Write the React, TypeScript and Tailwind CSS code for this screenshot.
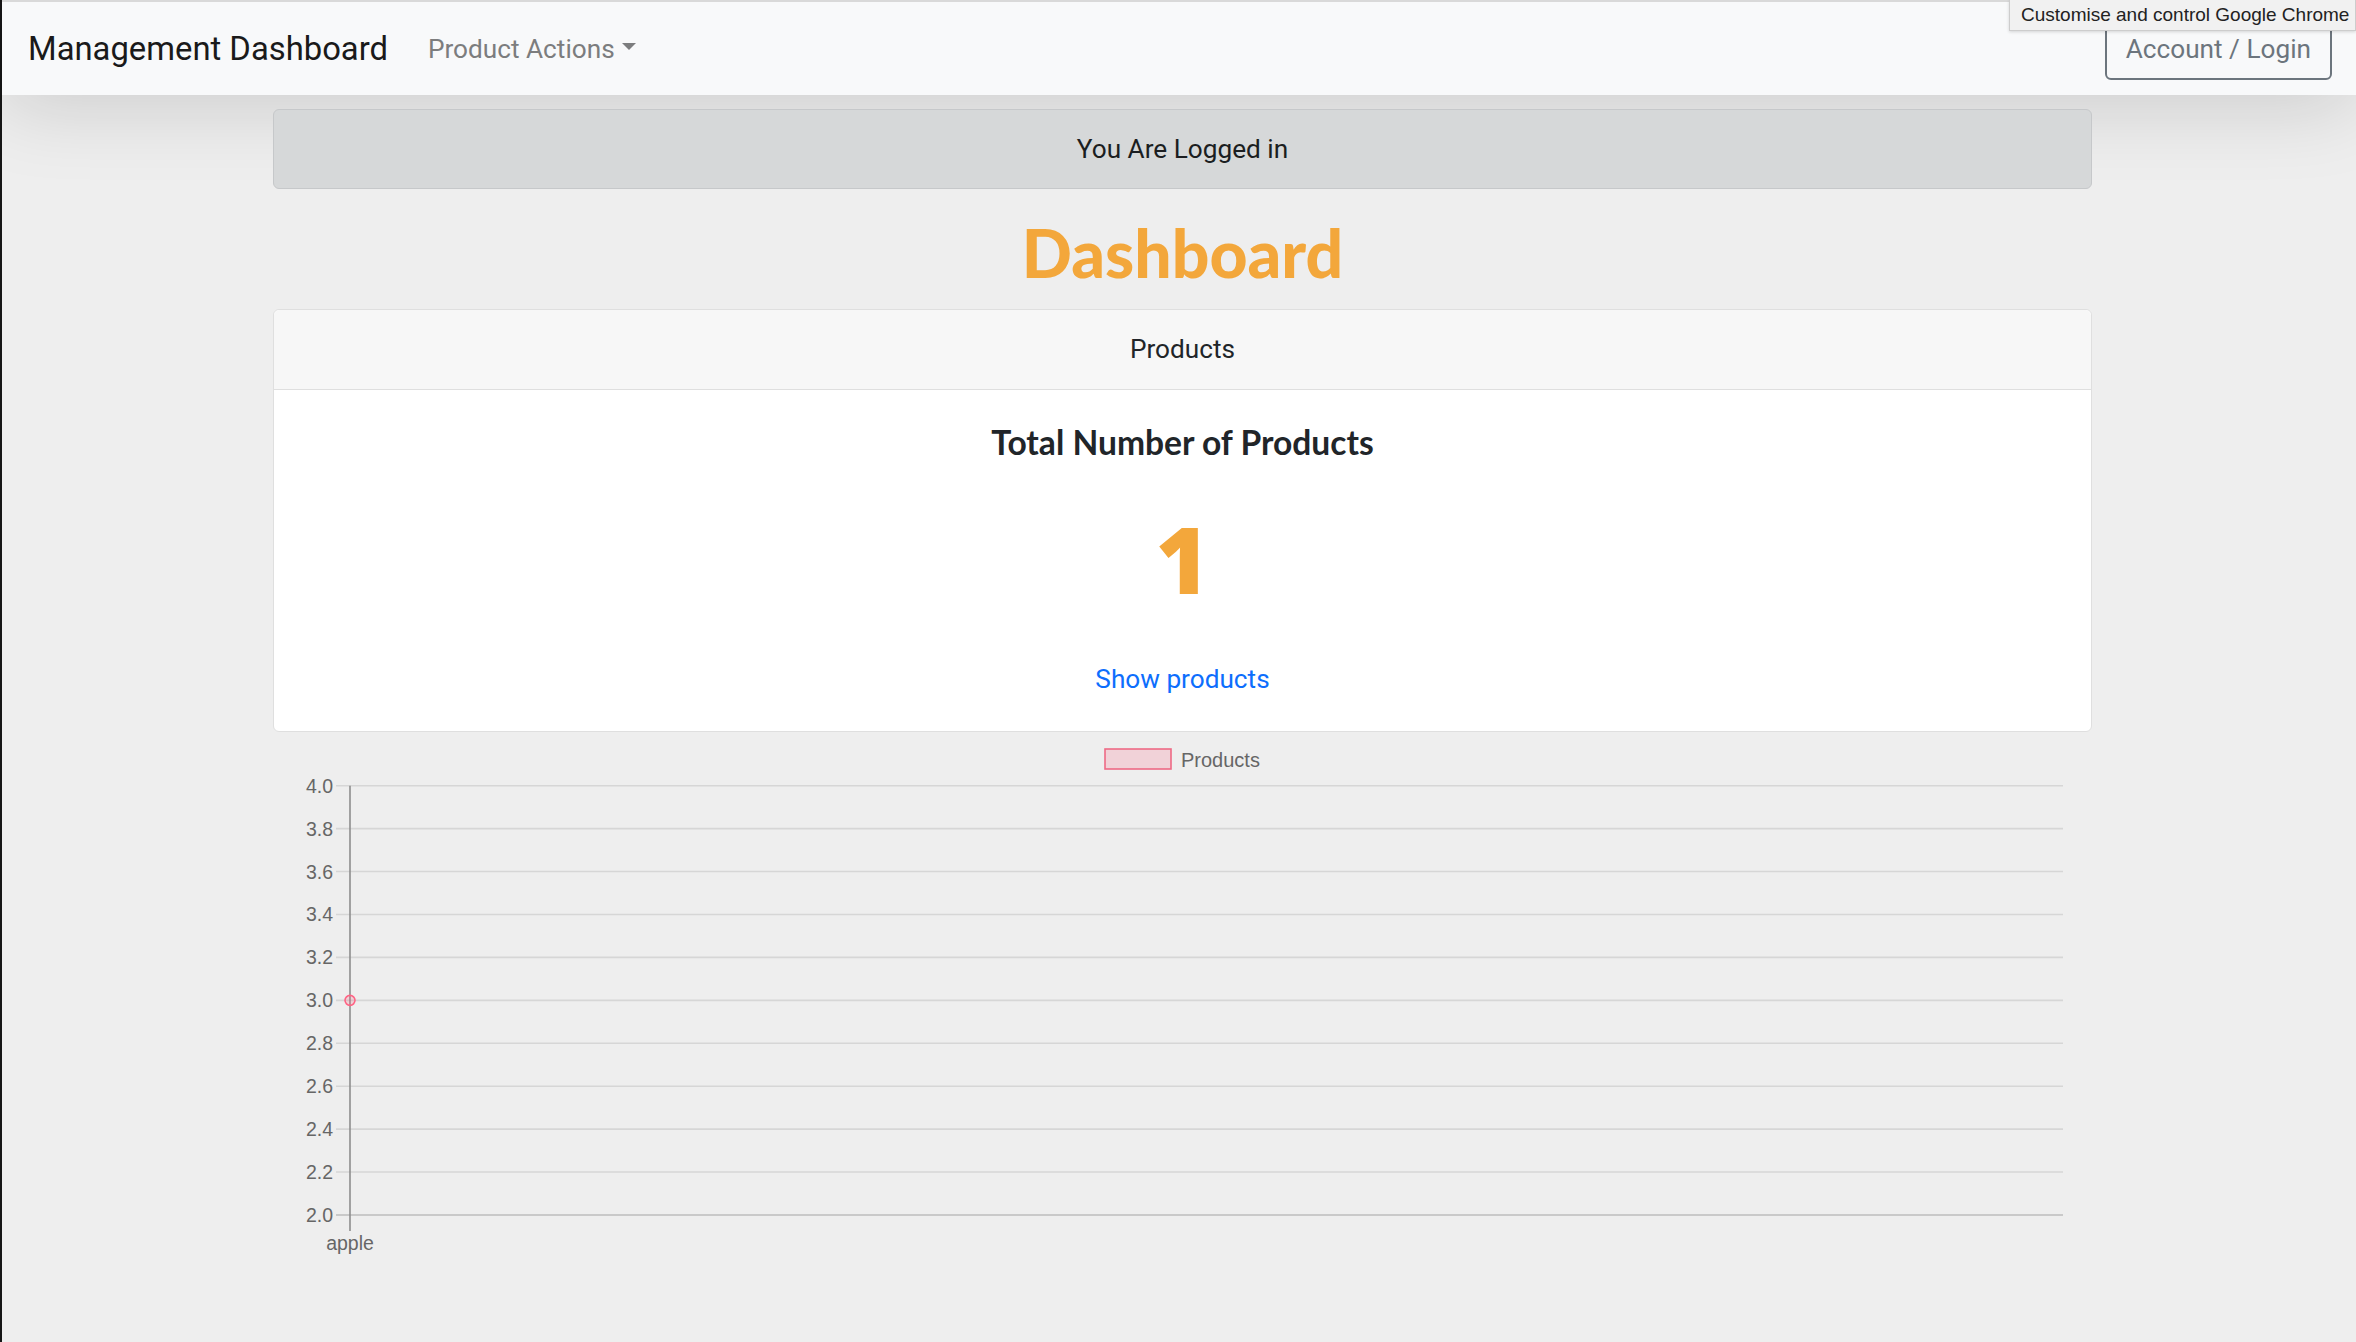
import React from "react";

const ticks = ["4.0", "3.8", "3.6", "3.4", "3.2", "3.0", "2.8", "2.6", "2.4", "2.2", "2.0"];
const Y0 = 53.7;
const STEP = 42.93;

function Chart() {
  return (
    <svg width={1819} height={600} viewBox="0 0 1819 600" className="block">
      {/* legend */}
      <rect x={832} y={17} width={66} height={20} fill="rgba(255,99,132,0.2)" stroke="#ee6a85" strokeWidth={1.6} />
      <text
        x={908}
        y={28}
        dominantBaseline="central"
        fontFamily="'Liberation Sans', Arial, sans-serif"
        fontSize={20}
        fill="#666666"
      >
        Products
      </text>
      {/* grid lines */}
      {ticks.map((t, i) => {
        const y = Y0 + i * STEP;
        return (
          <g key={t}>
            <line
              x1={63}
              x2={1790}
              y1={y}
              y2={y}
              stroke={i === ticks.length - 1 ? "#bdbdbd" : "#d6d6d6"}
              strokeWidth={1.6}
            />
            <text
              x={60}
              y={y}
              textAnchor="end"
              dominantBaseline="central"
              fontFamily="'Liberation Sans', Arial, sans-serif"
              fontSize={19.5}
              fill="#666666"
            >
              {t}
            </text>
          </g>
        );
      })}
      {/* y axis / category line */}
      <line x1={77} x2={77} y1={Y0} y2={499} stroke="#8d8d8d" strokeWidth={1.6} />
      <text
        x={77}
        y={511}
        textAnchor="middle"
        dominantBaseline="central"
        fontFamily="'Liberation Sans', Arial, sans-serif"
        fontSize={19.5}
        fill="#666666"
      >
        apple
      </text>
      {/* data point */}
      <circle cx={77} cy={Y0 + 5 * STEP} r={5} fill="rgba(255,99,132,0.2)" stroke="#ff6384" strokeWidth={1.6} />
    </svg>
  );
}

export default function App() {
  return (
    <div className="relative flex min-h-[1342px] w-full bg-[#eeeeee] overflow-hidden">
      <div className="w-[2px] shrink-0 bg-[#161616]" />
      <div className="flex min-w-0 flex-1 flex-col">
        <nav className="flex h-[95px] items-center border-t-2 border-[#d9d9d9] bg-[#f8f9fa] pl-[26px] pr-[24px] pt-[2px] shadow-[0_10px_80px_rgba(0,0,0,0.15)]">
          <span className="font-['Roboto'] text-[32.8px] leading-none text-[#1a1a1a]">Management Dashboard</span>
          <span className="ml-[40px] flex items-center font-['Roboto'] text-[26.2px] leading-none text-[#7c7d7e]">
            Product Actions
            <span className="ml-[7px] mb-[5px] h-0 w-0 border-x-[7.5px] border-t-[7.5px] border-x-transparent border-t-[#7c7d7e]" />
          </span>
          <div className="ml-auto flex h-[61px] items-center rounded-[6px] border-2 border-[#6c757d] px-[19px] font-['Roboto'] text-[26.2px] leading-none text-[#6c757d]">
            Account / Login
          </div>
        </nav>

        <main className="ml-[271px] flex w-[1819px] flex-col">
          <div className="mt-[14px] flex h-[80px] items-center justify-center rounded-[6px] border-[1.6px] border-[#c6c8ca] bg-[#d6d8d9] font-['Roboto'] text-[26.2px] leading-none text-[#1b1e21]">
            You Are Logged in
          </div>

          <h1 className="flex h-[120px] items-center justify-center pt-[7px] font-['Lato'] text-[66px] font-black leading-none text-[#f3a73b]">
            Dashboard
          </h1>

          <div className="flex flex-col rounded-[6px] border-[1.6px] border-[#dfdfdf] bg-white">
            <div className="flex h-[80px] items-center justify-center rounded-t-[6px] border-b-[1.6px] border-[#dfdfdf] bg-[#f7f7f7] font-['Roboto'] text-[26.2px] leading-none text-[#212529]">
              Products
            </div>
            <div className="flex flex-col items-center pt-[33px] pb-[32px]">
              <div className="flex h-[40px] items-center font-['Lato'] text-[33.6px] font-bold leading-none text-[#212529]">
                Total Number of Products
              </div>
              <div className="mt-[46px] flex h-[100px] items-center font-['Open_Sans'] text-[92px] font-extrabold leading-none text-[#f3a73b]">
                1
              </div>
              <div className="mt-[50px] flex h-[40px] items-center font-['Roboto'] text-[26.2px] leading-none text-[#0d6efd]">
                Show products
              </div>
            </div>
          </div>

          <Chart />
        </main>
      </div>

      <div className="absolute right-0 top-0 z-20 flex h-[31px] w-[347px] items-center border border-t-0 border-[#cdcdcd] bg-[#f1f1f1] pb-[2px] pl-[11px] font-['Liberation_Sans'] text-[19px] leading-none text-[#222222] shadow-[0_1px_3px_rgba(0,0,0,0.15)]">
        Customise and control Google Chrome
      </div>
    </div>
  );
}
